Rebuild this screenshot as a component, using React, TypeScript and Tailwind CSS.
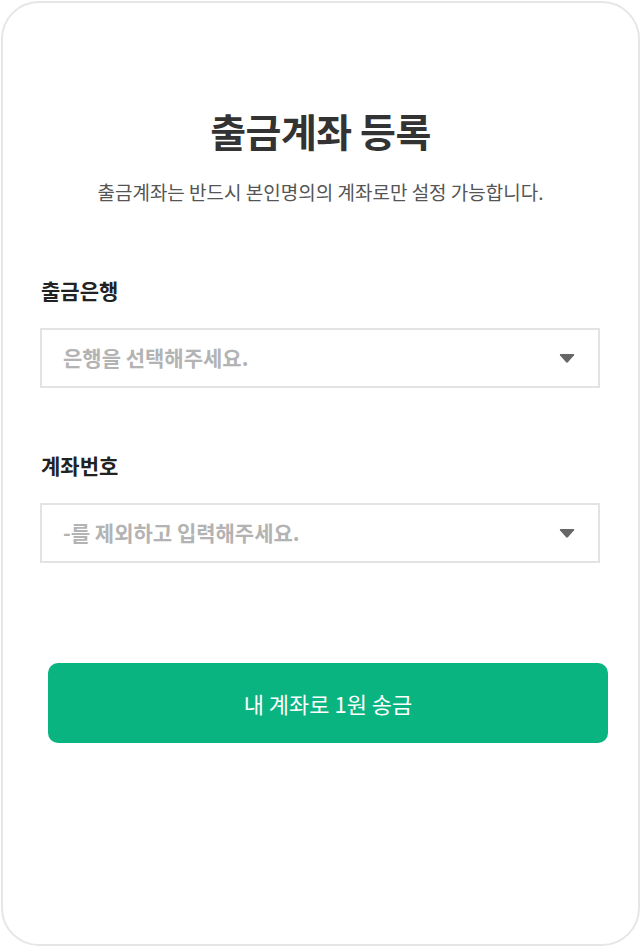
import React from 'react';

const font = { fontFamily: '"Noto Sans CJK KR", "Noto Sans", sans-serif' };

const Caret: React.FC = () => (
  <svg width="16" height="9" viewBox="0 0 16 9" className="shrink-0">
    <path d="M1 1.2 Q0.4 0 1.8 0 H14.2 Q15.6 0 15 1.2 L8.9 8.2 Q8 9.1 7.1 8.2 Z" fill="#666666" />
  </svg>
);

interface FieldProps {
  label: string;
  placeholder: string;
}

const Field: React.FC<FieldProps> = ({ label, placeholder }) => (
  <div className="flex flex-col">
    <label className="text-[21px] leading-[26px] font-bold text-[#222222] pl-[1px]">{label}</label>
    <div className="mt-[25px] h-[60px] w-[560px] border-2 border-[#e3e3e3] bg-white flex items-center justify-between pl-[21px] pr-[23px]">
      <span className="text-[21px] font-semibold text-[#b3b3b3]">{placeholder}</span>
      <Caret />
    </div>
  </div>
);

const App: React.FC = () => {
  return (
    <div className="w-[640px] h-[946px] bg-white" style={font}>
      <div className="w-[639px] h-[945px] ml-[1px] mt-[1px] border-2 border-[#e6e6e6] rounded-[38px] flex flex-col pl-[37px]">
        <h1 className="mt-[107px] pr-[37px] text-center text-[39px] leading-[40px] font-bold text-[#333333] tracking-[-0.5px]">
          출금계좌 등록
        </h1>
        <p className="mt-[30px] pr-[37px] text-center text-[19px] leading-[24px] text-[#555555]">
          출금계좌는 반드시 본인명의의 계좌로만 설정 가능합니다.
        </p>

        <div className="mt-[73px]">
          <Field label="출금은행" placeholder="은행을 선택해주세요." />
        </div>
        <div className="mt-[64px]">
          <Field label="계좌번호" placeholder="-를 제외하고 입력해주세요." />
        </div>

        <button className="mt-[100px] ml-[8px] w-[560px] h-[80px] rounded-[10px] bg-[#0ab480] text-white text-[22px] font-normal">
          내 계좌로 1원 송금
        </button>
      </div>
    </div>
  );
};

export default App;
